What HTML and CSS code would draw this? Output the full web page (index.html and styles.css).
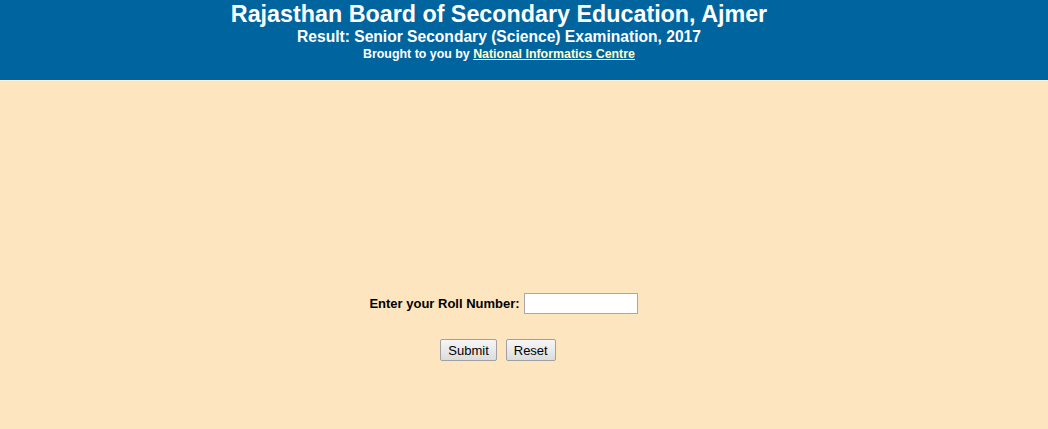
FILE: index.html
```html
<!DOCTYPE html>
<html>
<head>
<meta charset="utf-8">
<title>RBSE Result 2017</title>
<link rel="stylesheet" href="styles.css">
</head>
<body>
<header class="banner">
  <div class="frame">
    <h1 class="banner-title">Rajasthan Board of Secondary Education, Ajmer</h1>
    <h2 class="banner-sub">Result: Senior Secondary (Science) Examination, 2017</h2>
    <p class="banner-credit">Brought to you by <a href="#">National Informatics Centre</a></p>
  </div>
</header>
<main class="content">
  <div class="frame">
    <form class="roll-form">
      <div class="roll-row">
        <label class="roll-label" for="roll">Enter your Roll Number:</label>
        <input class="roll-input" id="roll" type="text">
      </div>
      <div class="btn-row">
        <button type="submit" class="btn">Submit</button>
        <button type="reset" class="btn">Reset</button>
      </div>
    </form>
  </div>
</main>
</body>
</html>
```
FILE: styles.css
```css
html, body {
  margin: 0;
  padding: 0;
  height: 100%;
}
body {
  background: #fde6bf;
  font-family: "Liberation Sans", Arial, sans-serif;
  color: #000;
}
.frame {
  width: 998px;
}
.banner {
  background: #00659f;
  color: #fff;
  height: 81px;
  box-sizing: border-box;
  padding-top: 1px;
  text-align: center;
  border-bottom: 1px solid #fdf0d8;
}
.banner-title {
  margin: 0;
  font-size: 23.3px;
  line-height: 26px;
  font-weight: bold;
}
.banner-sub {
  margin: 0;
  padding-top: 1px;
  font-size: 15.6px;
  line-height: 18px;
  font-weight: bold;
}
.banner-credit {
  margin: 0;
  padding-top: 1px;
  font-size: 12.4px;
  line-height: 14px;
  font-weight: bold;
}
.banner-credit a {
  color: #ffffcc;
}
.content {
  padding-top: 212px;
}
.roll-form {
  display: flex;
  flex-direction: column;
  align-items: center;
  gap: 25px;
}
.roll-row {
  display: flex;
  align-items: center;
  gap: 4px;
  font-size: 13px;
  font-weight: bold;
  margin-left: 9px;
}
.roll-input {
  width: 108px;
  height: 15px;
  border: 1px solid #a9a9a9;
  padding: 2px;
  background: #fff;
  font-size: 13px;
}
.btn-row {
  display: flex;
  gap: 9px;
  margin-left: -2px;
}
.btn {
  font-family: "Liberation Sans", Arial, sans-serif;
  font-size: 13px;
  height: 22px;
  padding: 0 7px;
  border: 1px solid #a0a0a0;
  border-radius: 2px;
  background: linear-gradient(#f6f6f6, #dcdcdc);
  color: #000;
}
```
